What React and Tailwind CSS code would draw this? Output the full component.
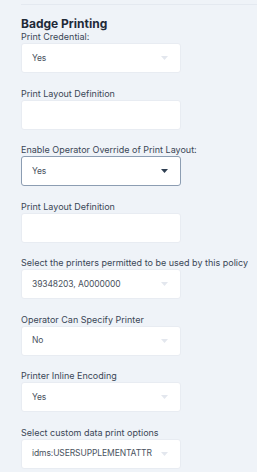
const fields = [
  { label: 'Print Credential:', value: 'Yes', type: 'select' },
  { label: 'Print Layout Definition', value: '', type: 'input' },
  { label: 'Enable Operator Override of Print Layout:', value: 'Yes', type: 'select', active: true },
  { label: 'Print Layout Definition', value: '', type: 'input' },
  { label: 'Select the printers permitted to be used by this policy', value: '39348203, A0000000', type: 'select' },
  { label: 'Operator Can Specify Printer', value: 'No', type: 'select' },
  { label: 'Printer Inline Encoding', value: 'Yes', type: 'select' },
  { label: 'Select custom data print options', value: 'idms:USERSUPPLEMENTATTR', type: 'select' },
];

const Caret = ({ active }) => (
  <svg width="7" height="4" viewBox="0 0 7 4" className="shrink-0">
    <path d="M0 0h7L3.5 4z" fill={active ? '#2f3f52' : '#e3e7ee'} />
  </svg>
);

const App = () => {
  return (
    <div className="w-[257px] h-[472px] overflow-hidden bg-[#eff3f8] font-[Inter,sans-serif] text-[#2c3847]">
      <div className="ml-[21px] mt-[4px] border-t border-[#e4e9f0]" />
      <div className="pl-[21px] pt-[11px]">
        <h2 className="text-[12px] leading-[15px] font-bold text-[#1f2a38]">Badge Printing</h2>
        <div className="flex flex-col gap-[14.5px]">
          {fields.map((f, i) => (
            <div key={i} className="flex flex-col">
              <label className="text-[9px] leading-[11px] h-[12px] text-[#3a4656] whitespace-nowrap">{f.label}</label>
              <div
                className={
                  'w-[160px] h-[30px] rounded-[3px] bg-white flex items-center pl-[10px] pr-[12px] ' +
                  (f.active ? 'border border-[#8c9db2]' : 'border border-[#e8ecf2]')
                }
              >
                <span className="flex-1 text-[8.5px] tracking-[-0.1px] text-[#4a5260] whitespace-nowrap overflow-hidden">{f.value}</span>
                {f.type === 'select' && <Caret active={f.active} />}
              </div>
            </div>
          ))}
        </div>
      </div>
    </div>
  );
};

export default App;
